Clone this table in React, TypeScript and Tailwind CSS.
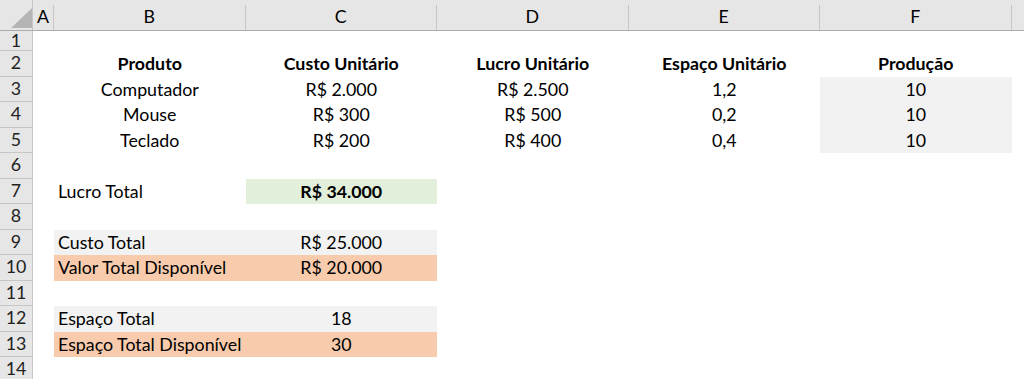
import React from "react";

const COLS = ["B", "C", "D", "E", "F"];

type Cell = { text?: string; bold?: boolean; align?: "left" | "center"; bg?: string };

const gray = "bg-[#f2f2f2]";
const green = "bg-[#e2efda]";
const orange = "bg-[#f8cbad]";

const rows: { h: string; cells: Cell[] }[] = [
  { h: "h-[20px]", cells: [{}, {}, {}, {}, {}] },
  {
    h: "h-[25.5px]",
    cells: [
      { text: "Produto", bold: true },
      { text: "Custo Unitário", bold: true },
      { text: "Lucro Unitário", bold: true },
      { text: "Espaço Unitário", bold: true },
      { text: "Produção", bold: true },
    ],
  },
  {
    h: "h-[25.5px]",
    cells: [
      { text: "Computador" },
      { text: "R$ 2.000" },
      { text: "R$ 2.500" },
      { text: "1,2" },
      { text: "10", bg: gray },
    ],
  },
  {
    h: "h-[25.5px]",
    cells: [
      { text: "Mouse" },
      { text: "R$ 300" },
      { text: "R$ 500" },
      { text: "0,2" },
      { text: "10", bg: gray },
    ],
  },
  {
    h: "h-[25.5px]",
    cells: [
      { text: "Teclado" },
      { text: "R$ 200" },
      { text: "R$ 400" },
      { text: "0,4" },
      { text: "10", bg: gray },
    ],
  },
  { h: "h-[25.5px]", cells: [{}, {}, {}, {}, {}] },
  {
    h: "h-[25.5px]",
    cells: [
      { text: "Lucro Total", align: "left" },
      { text: "R$ 34.000", bold: true, bg: green },
      {},
      {},
      {},
    ],
  },
  { h: "h-[25.5px]", cells: [{}, {}, {}, {}, {}] },
  {
    h: "h-[25.5px]",
    cells: [
      { text: "Custo Total", align: "left", bg: gray },
      { text: "R$ 25.000", bg: gray },
      {},
      {},
      {},
    ],
  },
  {
    h: "h-[25.5px]",
    cells: [
      { text: "Valor Total Disponível", align: "left", bg: orange },
      { text: "R$ 20.000", bg: orange },
      {},
      {},
      {},
    ],
  },
  { h: "h-[25.5px]", cells: [{}, {}, {}, {}, {}] },
  {
    h: "h-[25.5px]",
    cells: [
      { text: "Espaço Total", align: "left", bg: gray },
      { text: "18", bg: gray },
      {},
      {},
      {},
    ],
  },
  {
    h: "h-[25.5px]",
    cells: [
      { text: "Espaço Total Disponível", align: "left", bg: orange },
      { text: "30", bg: orange },
      {},
      {},
      {},
    ],
  },
  { h: "h-[25.5px]", cells: [{}, {}, {}, {}, {}] },
];

export default function App() {
  return (
    <div
      className="w-[1024px] h-[379px] overflow-hidden bg-white text-[17.8px] text-black leading-none"
      style={{ fontFamily: "Lato, 'Noto Sans', sans-serif" }}
    >
      {/* column header */}
      <div className="flex h-[31px] bg-[#e6e6e6] border-b border-[#ababab]">
        <div className="relative w-[33px] shrink-0 border-r border-[#c6c6c6]">
          <svg className="absolute left-[11px] top-[8px]" width="21" height="20" viewBox="0 0 21 20">
            <polygon points="21,0 21,20 0,20" fill="#b4b4b4" />
          </svg>
        </div>
        <div className="flex w-[21px] shrink-0 items-end">
          <div className="flex h-[25px] w-full items-center justify-center border-r border-[#c6c6c6] pb-[1px]">
            A
          </div>
        </div>
        {COLS.map((c) => (
          <div key={c} className="flex w-[191.5px] shrink-0 items-end">
            <div className="flex h-[25px] w-full items-center justify-center border-r border-[#c6c6c6] pb-[1px]">
              {c}
            </div>
          </div>
        ))}
        <div className="flex-1" />
      </div>
      {rows.map((r, i) => (
        <div key={i} className={`flex ${r.h}`}>
          <div className="flex w-[33px] shrink-0 items-center justify-center border-r border-b border-[#c6c6c6] bg-[#e6e6e6] text-[#222]">
            {i + 1}
          </div>
          <div className="w-[21px] shrink-0" />
          {r.cells.map((c, j) => (
            <div
              key={j}
              className={`flex w-[191.5px] shrink-0 items-center pt-[1px] ${
                c.align === "left" ? "justify-start pl-[4px]" : "justify-center"
              } ${c.bg ?? ""} ${c.bold ? "font-bold" : ""}`}
            >
              {c.text}
            </div>
          ))}
          <div className="flex-1" />
        </div>
      ))}
    </div>
  );
}
